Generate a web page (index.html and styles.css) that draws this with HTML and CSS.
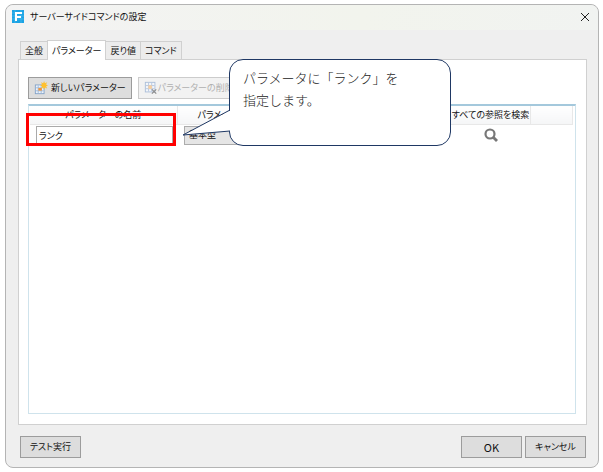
FILE: index.html
```
<!DOCTYPE html>
<html lang="ja">
  <head>
    <meta charset="utf-8" />
    <title>サーバーサイドコマンドの設定</title>
    <link rel="stylesheet" href="styles.css">
  </head>
  <body>
    <div class="dialog">
      <header class="titlebar">
        <svg class="logo" viewBox="0 0 12 13" aria-hidden="true">
          <rect width="12" height="13" fill="#1ba3e4" />
          <path d="M0 3h12M0 6h12M0 9h12M3 0v13M9 0v13" stroke="#5cc4f2" stroke-width=".5" />
          <path d="M3 11V2h7v2H5v2h4v2H5v3z" fill="#fff" />
        </svg>
        <h1>サーバーサイドコマンドの設定</h1>
        <button class="close" aria-label="閉じる">
          <svg viewBox="0 0 10 10"><path d="M1 1l8 8M9 1l-8 8" stroke="#222" fill="none" /></svg>
        </button>
      </header>

      <main class="content">
        <nav class="tabs" role="tablist">
          <button class="tab" role="tab">全般</button>
          <button class="tab active" role="tab" aria-selected="true">パラメーター</button>
          <button class="tab" role="tab">戻り値</button>
          <button class="tab" role="tab">コマンド</button>
        </nav>

        <section class="panel">
          <div class="toolbar">
            <button class="btn">
              <svg class="icon" viewBox="0 0 16 16" aria-hidden="true">
                <rect x="1.5" y="4.5" width="10" height="10" fill="#eef4fb" stroke="#7f9fc6" />
                <path d="M4.8 5v9M8.2 5v9M2 7.8h9M2 11.2h9" stroke="#9bb6d8" />
                <rect x="5" y="8" width="4" height="3" fill="#f0963c" />
                <path d="M11.500 0l1 2.700 2.500-1.200-1.200 2.500 2.200 1-2.200 1 1.200 2.500-2.500-1.200-1 2.700-1-2.700L8 8.500 9.200 6 7 5l2.200-1L8 1.500l2.500 1.200z" fill="#ffc02e" />
              </svg>
              新しいパラメーター
            </button>
            <button class="btn btn-delete" disabled>
              <svg class="icon" viewBox="0 0 16 16" aria-hidden="true">
                <rect x="1.500" y="1.500" width="11" height="11" fill="#f3f6fa" stroke="#a9bcd8" />
                <path d="M5.200 2v10M8.800 2v10M2 5.200h10M2 8.800h10" stroke="#b4c5de" />
                <rect x="5" y="5" width="4" height="4" fill="#f7cfa0" />
                <path d="M9 9.500l5 5M14 9.500l-5 5" stroke="#8c8c8c" stroke-width="1.400" />
              </svg>
              パラメーターの削除
            </button>
          </div>

          <div class="grid">
            <table>
              <colgroup>
                <col class="col-name">
                <col class="col-type">
                <col>
                <col class="col-search">
                <col class="col-rest">
              </colgroup>
              <thead>
                <tr>
                  <th>パラメーターの名前</th>
                  <th>パラメーターの型</th>
                  <th></th>
                  <th>すべての参照を検索</th>
                  <th></th>
                </tr>
              </thead>
              <tbody>
                <tr>
                  <td class="cell-name"><input class="field" type="text" value="ランク" aria-label="パラメーターの名前"></td>
                  <td class="cell-type">
                    <select class="type" aria-label="パラメーターの型">
                      <option>基本型</option>
                    </select>
                  </td>
                  <td></td>
                  <td class="cell-search">
                    <button class="find" aria-label="すべての参照を検索">
                      <svg viewBox="0 0 14 14"><circle cx="6" cy="6" r="4.500" fill="none" stroke="#777" stroke-width="2.200" /><path d="M9 9l4 4" stroke="#777" stroke-width="2.800" /></svg>
                    </button>
                  </td>
                  <td></td>
                </tr>
              </tbody>
            </table>

            <div class="highlight"></div>
            <div class="callout">
              <svg class="tail" viewBox="0 0 49 24" aria-hidden="true">
                <path d="M49 1L1 26L49 22z" fill="#fff" />
                <path d="M48 1L1 26L48 22" fill="none" stroke="#1f3864" />
              </svg>
              <p>パラメータに「ランク」を<br>指定します。</p>
            </div>
          </div>
        </section>
      </main>

      <footer class="actions">
        <button class="btn">テスト実行</button>
        <button class="btn btn-ok">OK</button>
        <button class="btn">キャンセル</button>
      </footer>
    </div>
  </body>
</html>
```

FILE: styles.css
```
* {
  box-sizing: border-box;
}

body {
  margin: 0;
  min-height: 100vh;
  display: flex;
  padding: 4px 4px 4px 5px;
  background: #fff;
  color: #111;
  font-family: "Noto Sans CJK JP", sans-serif;
  font-size: 9px;
  line-height: 16px;
  font-feature-settings: "palt";
}

button,
input,
select {
  font: inherit;
  font-feature-settings: inherit;
  color: inherit;
}

.dialog {
  flex: 1;
  display: flex;
  flex-direction: column;
  background: #efefef;
  border: 1px solid #b4b4b4;
  border-radius: 8px;
}

.titlebar {
  display: flex;
  align-items: center;
  gap: 6px;
  height: 25px;
  padding: 0 8px 2px 6px;
  background: linear-gradient(90deg, #f3f3f3, #f2f4ed 60%, #f1f3f1);
  border-radius: 8px 8px 0 0;
}

.titlebar h1 {
  flex: 1;
  margin: 0;
  font-size: 9px;
  font-weight: 400;
}

.logo {
  width: 12px;
  height: 13px;
}

.close {
  display: flex;
  padding: 0;
  border: 0;
  background: none;
}

.close svg {
  width: 10px;
  height: 10px;
}

.content {
  flex: 1;
  display: flex;
  flex-direction: column;
  padding: 10px 11px 0 12px;
}

.tabs {
  display: flex;
  align-items: flex-end;
  padding-left: 2px;
}

.tab {
  height: 18px;
  padding: 0 4px;
  margin-right: -1px;
  border: 1px solid #d0d0d0;
  border-bottom: 0;
  background: #ececec;
}

.tab.active {
  position: relative;
  height: 20px;
  margin-bottom: -1px;
  background: #fff;
}

.panel {
  flex: 1;
  display: flex;
  flex-direction: column;
  padding: 17px 10px 10px 9px;
  background: #fff;
  border: 1px solid #d0d0d0;
}

.toolbar {
  display: flex;
  gap: 6px;
  margin-bottom: 5px;
}

.btn {
  display: flex;
  align-items: center;
  justify-content: center;
  gap: 3px;
  height: 22px;
  padding: 0 5px;
  border: 1px solid #9c9c9c;
  background: #ddd;
}

.btn:disabled {
  background: #f2f2f2;
  border-color: #ccc;
  color: #b0b0b0;
}

.btn-delete {
  gap: 0;
}

.icon {
  width: 14px;
  height: 14px;
}

.grid {
  flex: 1;
  position: relative;
  padding: 0 2px 0 1px;
  border: 1px solid #cfe3ec;
  border-top: 2px solid #a4c8dc;
}

table {
  width: 100%;
  table-layout: fixed;
  border-collapse: collapse;
}

.col-name {
  width: 147px;
}

.col-type {
  width: 108px;
}

.col-search {
  width: 80px;
}

.col-rest {
  width: 42px;
}

th {
  height: 18px;
  padding: 0;
  border-right: 1px solid #e8e8e8;
  border-bottom: 1px solid #e8e8e8;
  background: linear-gradient(#fff, #f5f6f7);
  font-weight: 400;
  white-space: nowrap;
}

td {
  height: 22px;
  padding: 0;
}

.cell-name {
  padding: 0 4px 0 6px;
}

.field {
  display: block;
  width: 100%;
  height: 19px;
  padding: 0 2px;
  border: 1px solid #aaa;
  background: #fff;
}

.cell-type {
  padding: 0 7px;
}

.type {
  appearance: none;
  display: block;
  width: 100%;
  height: 19px;
  padding: 0 4px;
  border: 1px solid #acacac;
  border-radius: 0;
  background: #e5e5e5;
}

.find {
  display: block;
  margin: 0 auto;
  padding: 0;
  border: 0;
  background: none;
}

.find svg {
  display: block;
  width: 14px;
  height: 14px;
}

.highlight {
  position: absolute;
  top: 7px;
  left: -3px;
  width: 150px;
  height: 33px;
  border: 3px solid #f00;
}

/* speech bubble over the grid, tail points at the name field */
.callout {
  position: absolute;
  top: -47px;
  left: 200px;
  width: 222px;
  height: 87px;
  padding: 7px 13px;
  background: #fff;
  border: 1px solid #1f3864;
  border-radius: 14px;
  color: #222;
  font-size: 13px;
  font-weight: 300;
  line-height: 22px;
  font-feature-settings: normal;
}

.callout p {
  margin: 0;
}

.tail {
  position: absolute;
  top: 49px;
  left: -48px;
  width: 49px;
  height: 24px;
  overflow: visible;
}

.actions {
  display: flex;
  gap: 3px;
  padding: 11px 12px 9px 14px;
}

.actions .btn {
  min-width: 61px;
}

.actions .btn-ok {
  margin-left: auto;
  font-size: 11px;
}
```
